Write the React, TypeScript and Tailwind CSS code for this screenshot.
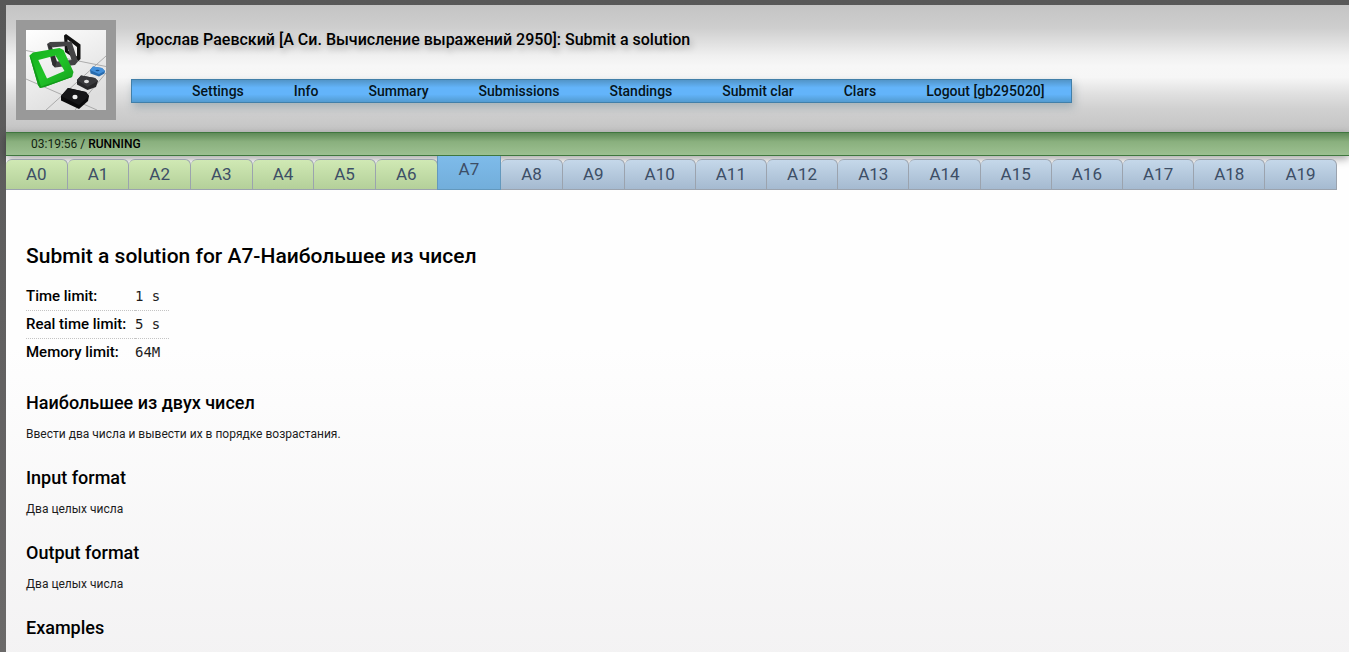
import React from "react";

const navItems = [
  "Settings",
  "Info",
  "Summary",
  "Submissions",
  "Standings",
  "Submit clar",
  "Clars",
  "Logout [gb295020]",
];

const problems = Array.from({ length: 20 }, (_, i) => `A${i}`);
const currentProblem = 7;

const limits = [
  { label: "Time limit:", value: "1 s" },
  { label: "Real time limit:", value: "5 s" },
  { label: "Memory limit:", value: "64M" },
];

function Logo() {
  return (
    <svg viewBox="0 0 80 80" className="block size-20" role="img" aria-label="ejudge">
      <defs>
        <linearGradient id="floor" x1="0" y1="0" x2="0.5" y2="1">
          <stop offset="0" stopColor="#ffffff" />
          <stop offset="1" stopColor="#dedede" />
        </linearGradient>
        <linearGradient id="green" x1="0" y1="0" x2="1" y2="1">
          <stop offset="0" stopColor="#14b01c" />
          <stop offset="0.5" stopColor="#20c428" />
          <stop offset="1" stopColor="#169c1c" />
        </linearGradient>
      </defs>
      <rect width="80" height="80" fill="url(#floor)" />
      <g stroke="#9c9c9c" strokeWidth="0.8" fill="none">
        <path d="M0 20.500L80 36.500M0 49L71 80M80 26L20 80M80 43L49 80" />
      </g>
      <path fillRule="evenodd" fill="#111" d="M38 5.500L40 4L54.500 14.500V29L52.500 31L39 22ZM41.500 9.500L42 20.500L51 26.500V17Z" />
      <path fillRule="evenodd" fill="#434345" d="M21 14L24 12L45.500 11.500L52 31.500L49 35L29 37.500L26.500 35ZM26 17.500L31 31.500L45.500 30L41 16Z" />
      <path d="M22 14L26.500 35L29 37.500L30.500 32L25.500 16.500Z" fill="#2f2f31" />
      <path fillRule="evenodd" fill="url(#green)" d="M3.500 25.500L7 22.500L33.500 18L37.500 20L47.500 42L46 47L18.500 57L14 58L12 55ZM12.300 30L21 48.500L38.500 41L29.500 25.500Z" />
      <path d="M3.500 25.500L5 27L15 56.500L46 46L47.500 42L46 47L18.500 57L14 58L12 55Z" fill="#129a1a" />
      <path d="M64 40L67 36.500L76 38L79 41L78.500 43.500L73 46.500L64.500 43.500Z" fill="#286bad" />
      <path d="M64 40L67 36.500L76 38L79 41L73 44Z" fill="#4390db" />
      <ellipse cx="71.5" cy="40.500" rx="2" ry="0.800" fill="#194f89" />
      <path d="M51 50L55 45.500L69 48L72 51L70 57L61.500 60L51 54.500Z" fill="#262628" />
      <path d="M51 50L55 45.500L69 48L72 51L61.500 57Z" fill="#38383b" />
      <ellipse cx="60.500" cy="51.500" rx="2.500" ry="1.700" fill="#dedede" />
      <path d="M35 66L42 58L60 62L63 66L62 71L53 79L35 70.500Z" fill="#0a0a0b" />
      <path d="M35 66L42 58L60 62L63 66L53 75Z" fill="#161618" />
      <ellipse cx="49" cy="67" rx="2.600" ry="2.200" fill="#eeeeee" />
    </svg>
  );
}

function ProblemTab({ name, index }: { name: string; index: number }) {
  if (index === currentProblem) {
    return (
      <a
        href={`#${name}`}
        aria-current="page"
        className="-ml-px block h-[34px] border border-t-0 border-[#6398bd] bg-gradient-to-b from-[#7ebbea] to-[#72aedb] px-[21px] leading-[26px]"
      >
        {name}
      </a>
    );
  }
  const tone =
    index < currentProblem
      ? "from-[#d0e9b4] to-[#b4d09a]"
      : "from-[#c5d8ea] to-[#a5bad0]";
  return (
    <a
      href={`#${name}`}
      className={`block h-[31px] rounded-t-md border border-l-0 border-[#9ba3ae] bg-gradient-to-b px-5 leading-7 ${tone}`}
    >
      {name}
    </a>
  );
}

function Section({ title, text }: { title: string; text?: string }) {
  return (
    <section className="h-[75px]">
      <h3 className="text-lg leading-6 font-medium">{title}</h3>
      {text && <p className="mt-[11px] text-xs leading-4 text-[#1c1c1c]">{text}</p>}
    </section>
  );
}

export default function App() {
  return (
    <div className="h-screen overflow-hidden bg-[#656363] bg-gradient-to-b from-[#585858] to-[#6b6969] pt-[5px] pl-[6px] font-['Roboto',sans-serif] text-black">
      <div className="flex min-h-full flex-col bg-gradient-to-b from-[#fefefe] from-50% to-[#f2f1f2]">
        <header className="flex bg-[linear-gradient(#c4c4c4,#cecece_18%,#f0f0f0_40%,#f7f7f7_48%,#f6f6f6_57%,#e0e0e0_70%,#d0d0d0_82%,#c4c4c4)] pt-[15px] pb-3 pl-[10px]">
          <div className="shrink-0 border-10 border-[#999]">
            <Logo />
          </div>
          <div className="ml-[15px]">
            <h1 className="ml-[5px] leading-10 font-medium [text-shadow:2px_4px_6px_rgba(0,0,0,0.25)]">
              Ярослав Раевский [А Си. Вычисление выражений 2950]: Submit a solution
            </h1>
            <nav className="mt-[19px] flex h-6 gap-[50px] border border-[#417fa9] bg-[linear-gradient(#5295c8,#63b4fa_35%,#63b4fa_65%,#529bd0)] pr-[26px] pl-[60px] text-sm leading-[22px] font-medium whitespace-nowrap shadow-[2px_4px_8px_rgba(90,120,135,0.4)]">
              {navItems.map((item) => (
                <a key={item} href="#" className="text-[#06151b]">
                  {item}
                </a>
              ))}
            </nav>
          </div>
        </header>
        <div className="relative h-6 border-y border-[#3f773f] bg-[linear-gradient(#5f8a58,#8ab07e_40%,#9cc091)] pl-[25px] text-xs leading-[22px] text-[#122411] shadow-[0_3px_8px_rgba(0,0,0,0.35)]">
          03:19:56 / <b className="font-medium text-black">RUNNING</b>
        </div>
        <nav className="relative flex h-[34px] items-end text-[17px] text-[#3d4e66]">
          {problems.map((name, i) => (
            <ProblemTab key={name} name={name} index={i} />
          ))}
        </nav>
        <main className="px-5 pt-[52px]">
          <h2 className="text-[21px] leading-7 font-medium">
            Submit a solution for A7-Наибольшее из чисел
          </h2>
          <table className="mt-3 mb-[25px] w-[143px] border-collapse text-left whitespace-nowrap">
            <tbody>
              {limits.map((limit) => (
                <tr
                  key={limit.label}
                  className="h-7 border-b border-dotted border-[#c4c4c4] last:border-b-0"
                >
                  <th scope="row" className="w-[109px] p-0 text-[15px] leading-5 font-medium">
                    {limit.label}
                  </th>
                  <td className="p-0 font-['DejaVu_Sans_Mono',monospace] text-sm leading-5 text-[#1c1c1c]">
                    {limit.value}
                  </td>
                </tr>
              ))}
            </tbody>
          </table>
          <Section title="Наибольшее из двух чисел" text="Ввести два числа и вывести их в порядке возрастания." />
          <Section title="Input format" text="Два целых числа" />
          <Section title="Output format" text="Два целых числа" />
          <Section title="Examples" />
        </main>
      </div>
    </div>
  );
}
